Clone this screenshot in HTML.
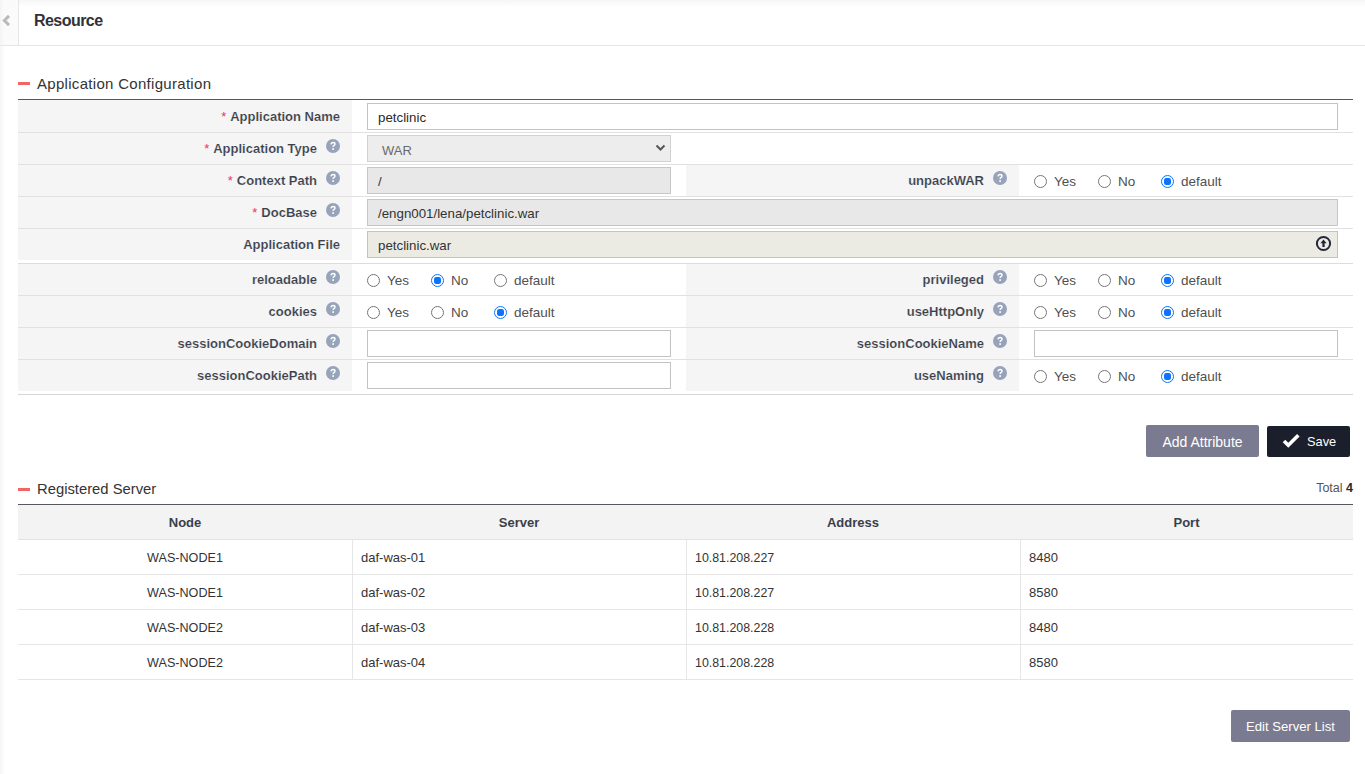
<!DOCTYPE html>
<html><head><meta charset="utf-8"><title>Resource</title>
<style>
html,body{margin:0;padding:0;background:#fff;}
body{width:1365px;height:774px;position:relative;overflow:hidden;font-family:"Liberation Sans", sans-serif;}
</style></head><body>
<div style="position:absolute;left:0px;top:0px;width:1365px;height:7px;background:linear-gradient(#f6f6f6,#ffffff);"></div>
<div style="position:absolute;left:0px;top:0px;width:18px;height:45px;background:linear-gradient(90deg,#f4f4f4,#fafafa 4px,#fbfbfb);"></div>
<div style="position:absolute;left:18px;top:0px;width:1px;height:45px;background:#e7e7e7;"></div>
<svg style="position:absolute;left:0;top:0" width="18" height="45"><polyline points="9,15.9 4.4,20.5 9,25.1" fill="none" stroke="#bababa" stroke-width="3"/></svg>
<div style="position:absolute;left:34px;top:10px;white-space:nowrap;font-weight:bold;font-size:16px;letter-spacing:-0.55px;color:#2f3238;height:22px;line-height:22px;">Resource</div>
<div style="position:absolute;left:0px;top:45px;width:1365px;height:1px;background:#e6e6e6;"></div>
<div style="position:absolute;left:0px;top:46px;width:4px;height:728px;background:linear-gradient(90deg,#f6f6f6,#fcfcfc);"></div>
<div style="position:absolute;left:18px;top:82px;width:12px;height:3px;background:#f06565;"></div>
<div style="position:absolute;left:37px;top:74px;white-space:nowrap;font-size:15px;letter-spacing:0.3px;color:#333;height:20px;line-height:20px;">Application Configuration</div>
<div style="position:absolute;left:18px;top:99px;width:1335px;height:1px;background:#55585f;"></div>
<div style="position:absolute;left:18px;top:132px;width:1335px;height:1px;background:#e1e1e1;"></div>
<div style="position:absolute;left:18px;top:164px;width:1335px;height:1px;background:#e1e1e1;"></div>
<div style="position:absolute;left:18px;top:196px;width:1335px;height:1px;background:#e1e1e1;"></div>
<div style="position:absolute;left:18px;top:228px;width:1335px;height:1px;background:#e1e1e1;"></div>
<div style="position:absolute;left:18px;top:295px;width:1335px;height:1px;background:#e1e1e1;"></div>
<div style="position:absolute;left:18px;top:327px;width:1335px;height:1px;background:#e1e1e1;"></div>
<div style="position:absolute;left:18px;top:359px;width:1335px;height:1px;background:#e1e1e1;"></div>
<div style="position:absolute;left:18px;top:263px;width:1335px;height:1px;background:#dcdcdc;"></div>
<div style="position:absolute;left:18px;top:394px;width:1335px;height:1px;background:#d6d6d6;"></div>
<div style="position:absolute;left:18px;top:100px;width:334px;height:32px;background:#f5f5f5;"></div>
<div style="position:absolute;left:18px;top:101px;white-space:nowrap;font-weight:bold;font-size:13px;color:#3a3f4a;-webkit-text-stroke:0.15px #f5f5f5;width:322px;height:32px;line-height:32px;text-align:right;"><span style="color:#e8336b;font-weight:normal;margin-right:4px;font-size:13px;-webkit-text-stroke:0">*</span>Application Name</div>
<div style="position:absolute;left:367px;top:103px;width:971px;height:27px;box-sizing:border-box;background:#fff;border:1px solid #c3c3c3;"></div>
<div style="position:absolute;left:378px;top:104px;white-space:nowrap;font-size:13.3px;color:#2a2a2a;height:27px;line-height:27px;">petclinic</div>
<div style="position:absolute;left:18px;top:133px;width:334px;height:31px;background:#f5f5f5;"></div>
<svg style="position:absolute;left:326px;top:139px" width="14" height="14" viewBox="0 0 14 14"><circle cx="7" cy="7" r="7" fill="#97a3b9"/><path d="M5.1 5.4 Q5.2 3.4 7.1 3.4 Q9 3.4 9 5 Q9 6.1 7.9 6.6 Q7.1 7 7.1 8.1" fill="none" stroke="#fff" stroke-width="1.45"/><rect x="6.25" y="9.2" width="1.7" height="1.7" fill="#fff"/></svg>
<div style="position:absolute;left:18px;top:133px;white-space:nowrap;font-weight:bold;font-size:13px;color:#3a3f4a;-webkit-text-stroke:0.15px #f5f5f5;width:299px;height:31px;line-height:31px;text-align:right;"><span style="color:#e8336b;font-weight:normal;margin-right:4px;font-size:13px;-webkit-text-stroke:0">*</span>Application Type</div>
<div style="position:absolute;left:367px;top:135px;width:304px;height:27px;box-sizing:border-box;background:#ededed;border:1px solid #d2d2d2;"></div>
<div style="position:absolute;left:382px;top:137px;white-space:nowrap;font-size:13px;color:#6a6a6a;height:27px;line-height:27px;">WAR</div>
<svg style="position:absolute;left:654px;top:143px" width="14" height="10"><polyline points="2.5,2.5 6.5,6.5 10.5,2.5" fill="none" stroke="#555" stroke-width="2"/></svg>
<div style="position:absolute;left:18px;top:165px;width:334px;height:31px;background:#f5f5f5;"></div>
<svg style="position:absolute;left:326px;top:171px" width="14" height="14" viewBox="0 0 14 14"><circle cx="7" cy="7" r="7" fill="#97a3b9"/><path d="M5.1 5.4 Q5.2 3.4 7.1 3.4 Q9 3.4 9 5 Q9 6.1 7.9 6.6 Q7.1 7 7.1 8.1" fill="none" stroke="#fff" stroke-width="1.45"/><rect x="6.25" y="9.2" width="1.7" height="1.7" fill="#fff"/></svg>
<div style="position:absolute;left:18px;top:165px;white-space:nowrap;font-weight:bold;font-size:13px;color:#3a3f4a;-webkit-text-stroke:0.15px #f5f5f5;width:299px;height:31px;line-height:31px;text-align:right;"><span style="color:#e8336b;font-weight:normal;margin-right:4px;font-size:13px;-webkit-text-stroke:0">*</span>Context Path</div>
<div style="position:absolute;left:367px;top:167px;width:304px;height:27px;box-sizing:border-box;background:#e8e8e8;border:1px solid #c6c6c6;"></div>
<div style="position:absolute;left:378px;top:168px;white-space:nowrap;font-size:13.3px;color:#333;height:27px;line-height:27px;">/</div>
<div style="position:absolute;left:686px;top:165px;width:333px;height:31px;background:#f5f5f5;"></div>
<svg style="position:absolute;left:993px;top:171px" width="14" height="14" viewBox="0 0 14 14"><circle cx="7" cy="7" r="7" fill="#97a3b9"/><path d="M5.1 5.4 Q5.2 3.4 7.1 3.4 Q9 3.4 9 5 Q9 6.1 7.9 6.6 Q7.1 7 7.1 8.1" fill="none" stroke="#fff" stroke-width="1.45"/><rect x="6.25" y="9.2" width="1.7" height="1.7" fill="#fff"/></svg>
<div style="position:absolute;left:686px;top:165px;white-space:nowrap;font-weight:bold;font-size:13px;color:#3a3f4a;-webkit-text-stroke:0.15px #f5f5f5;width:298px;height:31px;line-height:31px;text-align:right;">unpackWAR</div>
<svg style="position:absolute;left:1034px;top:175.0px" width="13" height="13" viewBox="0 0 13 13"><circle cx="6.5" cy="6.5" r="6" fill="#fff" stroke="#767676" stroke-width="1"/></svg>
<div style="position:absolute;left:1054px;top:172.0px;white-space:nowrap;font-size:13.5px;color:#505050;height:20px;line-height:20px;">Yes</div>
<svg style="position:absolute;left:1098px;top:175.0px" width="13" height="13" viewBox="0 0 13 13"><circle cx="6.5" cy="6.5" r="6" fill="#fff" stroke="#767676" stroke-width="1"/></svg>
<div style="position:absolute;left:1118px;top:172.0px;white-space:nowrap;font-size:13.5px;color:#505050;height:20px;line-height:20px;">No</div>
<svg style="position:absolute;left:1161px;top:175.0px" width="13" height="13" viewBox="0 0 13 13"><circle cx="6.5" cy="6.5" r="6" fill="#fff" stroke="#0b74ff" stroke-width="1"/><rect x="3" y="3" width="7" height="7" rx="2.2" fill="#0b74ff"/></svg>
<div style="position:absolute;left:1181px;top:172.0px;white-space:nowrap;font-size:13.5px;color:#505050;height:20px;line-height:20px;">default</div>
<div style="position:absolute;left:18px;top:197px;width:334px;height:31px;background:#f5f5f5;"></div>
<svg style="position:absolute;left:326px;top:203px" width="14" height="14" viewBox="0 0 14 14"><circle cx="7" cy="7" r="7" fill="#97a3b9"/><path d="M5.1 5.4 Q5.2 3.4 7.1 3.4 Q9 3.4 9 5 Q9 6.1 7.9 6.6 Q7.1 7 7.1 8.1" fill="none" stroke="#fff" stroke-width="1.45"/><rect x="6.25" y="9.2" width="1.7" height="1.7" fill="#fff"/></svg>
<div style="position:absolute;left:18px;top:197px;white-space:nowrap;font-weight:bold;font-size:13px;color:#3a3f4a;-webkit-text-stroke:0.15px #f5f5f5;width:299px;height:31px;line-height:31px;text-align:right;"><span style="color:#e8336b;font-weight:normal;margin-right:4px;font-size:13px;-webkit-text-stroke:0">*</span>DocBase</div>
<div style="position:absolute;left:367px;top:199px;width:971px;height:27px;box-sizing:border-box;background:#e8e8e8;border:1px solid #c6c6c6;"></div>
<div style="position:absolute;left:378px;top:200px;white-space:nowrap;font-size:13.3px;color:#333;height:27px;line-height:27px;">/engn001/lena/petclinic.war</div>
<div style="position:absolute;left:18px;top:229px;width:334px;height:31px;background:#f5f5f5;"></div>
<div style="position:absolute;left:18px;top:229px;white-space:nowrap;font-weight:bold;font-size:13px;color:#3a3f4a;-webkit-text-stroke:0.15px #f5f5f5;width:322px;height:31px;line-height:31px;text-align:right;">Application File</div>
<div style="position:absolute;left:367px;top:231px;width:971px;height:27px;box-sizing:border-box;background:#ebebe4;border:1px solid #c3c3c3;"></div>
<div style="position:absolute;left:378px;top:232px;white-space:nowrap;font-size:13.3px;color:#333;height:27px;line-height:27px;">petclinic.war</div>
<svg style="position:absolute;left:1315px;top:235px" width="17" height="17" viewBox="0 0 17 17"><circle cx="8.5" cy="8.5" r="6.6" fill="none" stroke="#232838" stroke-width="2"/><path d="M8.5 4.6 L11.6 8.2 L9.6 8.2 L9.6 12 L7.4 12 L7.4 8.2 L5.4 8.2 Z" fill="#1f2433"/></svg>
<div style="position:absolute;left:18px;top:264px;width:334px;height:31px;background:#f5f5f5;"></div>
<svg style="position:absolute;left:326px;top:270px" width="14" height="14" viewBox="0 0 14 14"><circle cx="7" cy="7" r="7" fill="#97a3b9"/><path d="M5.1 5.4 Q5.2 3.4 7.1 3.4 Q9 3.4 9 5 Q9 6.1 7.9 6.6 Q7.1 7 7.1 8.1" fill="none" stroke="#fff" stroke-width="1.45"/><rect x="6.25" y="9.2" width="1.7" height="1.7" fill="#fff"/></svg>
<div style="position:absolute;left:18px;top:264px;white-space:nowrap;font-weight:bold;font-size:13px;color:#3a3f4a;-webkit-text-stroke:0.15px #f5f5f5;width:299px;height:31px;line-height:31px;text-align:right;">reloadable</div>
<svg style="position:absolute;left:367px;top:273.5px" width="13" height="13" viewBox="0 0 13 13"><circle cx="6.5" cy="6.5" r="6" fill="#fff" stroke="#767676" stroke-width="1"/></svg>
<div style="position:absolute;left:387px;top:270.5px;white-space:nowrap;font-size:13.5px;color:#505050;height:20px;line-height:20px;">Yes</div>
<svg style="position:absolute;left:431px;top:273.5px" width="13" height="13" viewBox="0 0 13 13"><circle cx="6.5" cy="6.5" r="6" fill="#fff" stroke="#0b74ff" stroke-width="1"/><rect x="3" y="3" width="7" height="7" rx="2.2" fill="#0b74ff"/></svg>
<div style="position:absolute;left:451px;top:270.5px;white-space:nowrap;font-size:13.5px;color:#505050;height:20px;line-height:20px;">No</div>
<svg style="position:absolute;left:494px;top:273.5px" width="13" height="13" viewBox="0 0 13 13"><circle cx="6.5" cy="6.5" r="6" fill="#fff" stroke="#767676" stroke-width="1"/></svg>
<div style="position:absolute;left:514px;top:270.5px;white-space:nowrap;font-size:13.5px;color:#505050;height:20px;line-height:20px;">default</div>
<div style="position:absolute;left:686px;top:264px;width:333px;height:31px;background:#f5f5f5;"></div>
<svg style="position:absolute;left:993px;top:270px" width="14" height="14" viewBox="0 0 14 14"><circle cx="7" cy="7" r="7" fill="#97a3b9"/><path d="M5.1 5.4 Q5.2 3.4 7.1 3.4 Q9 3.4 9 5 Q9 6.1 7.9 6.6 Q7.1 7 7.1 8.1" fill="none" stroke="#fff" stroke-width="1.45"/><rect x="6.25" y="9.2" width="1.7" height="1.7" fill="#fff"/></svg>
<div style="position:absolute;left:686px;top:264px;white-space:nowrap;font-weight:bold;font-size:13px;color:#3a3f4a;-webkit-text-stroke:0.15px #f5f5f5;width:298px;height:31px;line-height:31px;text-align:right;">privileged</div>
<svg style="position:absolute;left:1034px;top:273.5px" width="13" height="13" viewBox="0 0 13 13"><circle cx="6.5" cy="6.5" r="6" fill="#fff" stroke="#767676" stroke-width="1"/></svg>
<div style="position:absolute;left:1054px;top:270.5px;white-space:nowrap;font-size:13.5px;color:#505050;height:20px;line-height:20px;">Yes</div>
<svg style="position:absolute;left:1098px;top:273.5px" width="13" height="13" viewBox="0 0 13 13"><circle cx="6.5" cy="6.5" r="6" fill="#fff" stroke="#767676" stroke-width="1"/></svg>
<div style="position:absolute;left:1118px;top:270.5px;white-space:nowrap;font-size:13.5px;color:#505050;height:20px;line-height:20px;">No</div>
<svg style="position:absolute;left:1161px;top:273.5px" width="13" height="13" viewBox="0 0 13 13"><circle cx="6.5" cy="6.5" r="6" fill="#fff" stroke="#0b74ff" stroke-width="1"/><rect x="3" y="3" width="7" height="7" rx="2.2" fill="#0b74ff"/></svg>
<div style="position:absolute;left:1181px;top:270.5px;white-space:nowrap;font-size:13.5px;color:#505050;height:20px;line-height:20px;">default</div>
<div style="position:absolute;left:18px;top:296px;width:334px;height:31px;background:#f5f5f5;"></div>
<svg style="position:absolute;left:326px;top:302px" width="14" height="14" viewBox="0 0 14 14"><circle cx="7" cy="7" r="7" fill="#97a3b9"/><path d="M5.1 5.4 Q5.2 3.4 7.1 3.4 Q9 3.4 9 5 Q9 6.1 7.9 6.6 Q7.1 7 7.1 8.1" fill="none" stroke="#fff" stroke-width="1.45"/><rect x="6.25" y="9.2" width="1.7" height="1.7" fill="#fff"/></svg>
<div style="position:absolute;left:18px;top:296px;white-space:nowrap;font-weight:bold;font-size:13px;color:#3a3f4a;-webkit-text-stroke:0.15px #f5f5f5;width:299px;height:31px;line-height:31px;text-align:right;">cookies</div>
<svg style="position:absolute;left:367px;top:305.5px" width="13" height="13" viewBox="0 0 13 13"><circle cx="6.5" cy="6.5" r="6" fill="#fff" stroke="#767676" stroke-width="1"/></svg>
<div style="position:absolute;left:387px;top:302.5px;white-space:nowrap;font-size:13.5px;color:#505050;height:20px;line-height:20px;">Yes</div>
<svg style="position:absolute;left:431px;top:305.5px" width="13" height="13" viewBox="0 0 13 13"><circle cx="6.5" cy="6.5" r="6" fill="#fff" stroke="#767676" stroke-width="1"/></svg>
<div style="position:absolute;left:451px;top:302.5px;white-space:nowrap;font-size:13.5px;color:#505050;height:20px;line-height:20px;">No</div>
<svg style="position:absolute;left:494px;top:305.5px" width="13" height="13" viewBox="0 0 13 13"><circle cx="6.5" cy="6.5" r="6" fill="#fff" stroke="#0b74ff" stroke-width="1"/><rect x="3" y="3" width="7" height="7" rx="2.2" fill="#0b74ff"/></svg>
<div style="position:absolute;left:514px;top:302.5px;white-space:nowrap;font-size:13.5px;color:#505050;height:20px;line-height:20px;">default</div>
<div style="position:absolute;left:686px;top:296px;width:333px;height:31px;background:#f5f5f5;"></div>
<svg style="position:absolute;left:993px;top:302px" width="14" height="14" viewBox="0 0 14 14"><circle cx="7" cy="7" r="7" fill="#97a3b9"/><path d="M5.1 5.4 Q5.2 3.4 7.1 3.4 Q9 3.4 9 5 Q9 6.1 7.9 6.6 Q7.1 7 7.1 8.1" fill="none" stroke="#fff" stroke-width="1.45"/><rect x="6.25" y="9.2" width="1.7" height="1.7" fill="#fff"/></svg>
<div style="position:absolute;left:686px;top:296px;white-space:nowrap;font-weight:bold;font-size:13px;color:#3a3f4a;-webkit-text-stroke:0.15px #f5f5f5;width:298px;height:31px;line-height:31px;text-align:right;">useHttpOnly</div>
<svg style="position:absolute;left:1034px;top:305.5px" width="13" height="13" viewBox="0 0 13 13"><circle cx="6.5" cy="6.5" r="6" fill="#fff" stroke="#767676" stroke-width="1"/></svg>
<div style="position:absolute;left:1054px;top:302.5px;white-space:nowrap;font-size:13.5px;color:#505050;height:20px;line-height:20px;">Yes</div>
<svg style="position:absolute;left:1098px;top:305.5px" width="13" height="13" viewBox="0 0 13 13"><circle cx="6.5" cy="6.5" r="6" fill="#fff" stroke="#767676" stroke-width="1"/></svg>
<div style="position:absolute;left:1118px;top:302.5px;white-space:nowrap;font-size:13.5px;color:#505050;height:20px;line-height:20px;">No</div>
<svg style="position:absolute;left:1161px;top:305.5px" width="13" height="13" viewBox="0 0 13 13"><circle cx="6.5" cy="6.5" r="6" fill="#fff" stroke="#0b74ff" stroke-width="1"/><rect x="3" y="3" width="7" height="7" rx="2.2" fill="#0b74ff"/></svg>
<div style="position:absolute;left:1181px;top:302.5px;white-space:nowrap;font-size:13.5px;color:#505050;height:20px;line-height:20px;">default</div>
<div style="position:absolute;left:18px;top:328px;width:334px;height:31px;background:#f5f5f5;"></div>
<svg style="position:absolute;left:326px;top:334px" width="14" height="14" viewBox="0 0 14 14"><circle cx="7" cy="7" r="7" fill="#97a3b9"/><path d="M5.1 5.4 Q5.2 3.4 7.1 3.4 Q9 3.4 9 5 Q9 6.1 7.9 6.6 Q7.1 7 7.1 8.1" fill="none" stroke="#fff" stroke-width="1.45"/><rect x="6.25" y="9.2" width="1.7" height="1.7" fill="#fff"/></svg>
<div style="position:absolute;left:18px;top:328px;white-space:nowrap;font-weight:bold;font-size:13px;color:#3a3f4a;-webkit-text-stroke:0.15px #f5f5f5;width:299px;height:31px;line-height:31px;text-align:right;">sessionCookieDomain</div>
<div style="position:absolute;left:367px;top:330px;width:304px;height:27px;box-sizing:border-box;background:#fff;border:1px solid #c3c3c3;"></div>
<div style="position:absolute;left:686px;top:328px;width:333px;height:31px;background:#f5f5f5;"></div>
<svg style="position:absolute;left:993px;top:334px" width="14" height="14" viewBox="0 0 14 14"><circle cx="7" cy="7" r="7" fill="#97a3b9"/><path d="M5.1 5.4 Q5.2 3.4 7.1 3.4 Q9 3.4 9 5 Q9 6.1 7.9 6.6 Q7.1 7 7.1 8.1" fill="none" stroke="#fff" stroke-width="1.45"/><rect x="6.25" y="9.2" width="1.7" height="1.7" fill="#fff"/></svg>
<div style="position:absolute;left:686px;top:328px;white-space:nowrap;font-weight:bold;font-size:13px;color:#3a3f4a;-webkit-text-stroke:0.15px #f5f5f5;width:298px;height:31px;line-height:31px;text-align:right;">sessionCookieName</div>
<div style="position:absolute;left:1034px;top:330px;width:304px;height:27px;box-sizing:border-box;background:#fff;border:1px solid #c3c3c3;"></div>
<div style="position:absolute;left:18px;top:360px;width:334px;height:31px;background:#f5f5f5;"></div>
<svg style="position:absolute;left:326px;top:366px" width="14" height="14" viewBox="0 0 14 14"><circle cx="7" cy="7" r="7" fill="#97a3b9"/><path d="M5.1 5.4 Q5.2 3.4 7.1 3.4 Q9 3.4 9 5 Q9 6.1 7.9 6.6 Q7.1 7 7.1 8.1" fill="none" stroke="#fff" stroke-width="1.45"/><rect x="6.25" y="9.2" width="1.7" height="1.7" fill="#fff"/></svg>
<div style="position:absolute;left:18px;top:360px;white-space:nowrap;font-weight:bold;font-size:13px;color:#3a3f4a;-webkit-text-stroke:0.15px #f5f5f5;width:299px;height:31px;line-height:31px;text-align:right;">sessionCookiePath</div>
<div style="position:absolute;left:367px;top:362px;width:304px;height:27px;box-sizing:border-box;background:#fff;border:1px solid #c3c3c3;"></div>
<div style="position:absolute;left:686px;top:360px;width:333px;height:31px;background:#f5f5f5;"></div>
<svg style="position:absolute;left:993px;top:366px" width="14" height="14" viewBox="0 0 14 14"><circle cx="7" cy="7" r="7" fill="#97a3b9"/><path d="M5.1 5.4 Q5.2 3.4 7.1 3.4 Q9 3.4 9 5 Q9 6.1 7.9 6.6 Q7.1 7 7.1 8.1" fill="none" stroke="#fff" stroke-width="1.45"/><rect x="6.25" y="9.2" width="1.7" height="1.7" fill="#fff"/></svg>
<div style="position:absolute;left:686px;top:360px;white-space:nowrap;font-weight:bold;font-size:13px;color:#3a3f4a;-webkit-text-stroke:0.15px #f5f5f5;width:298px;height:31px;line-height:31px;text-align:right;">useNaming</div>
<svg style="position:absolute;left:1034px;top:369.5px" width="13" height="13" viewBox="0 0 13 13"><circle cx="6.5" cy="6.5" r="6" fill="#fff" stroke="#767676" stroke-width="1"/></svg>
<div style="position:absolute;left:1054px;top:366.5px;white-space:nowrap;font-size:13.5px;color:#505050;height:20px;line-height:20px;">Yes</div>
<svg style="position:absolute;left:1098px;top:369.5px" width="13" height="13" viewBox="0 0 13 13"><circle cx="6.5" cy="6.5" r="6" fill="#fff" stroke="#767676" stroke-width="1"/></svg>
<div style="position:absolute;left:1118px;top:366.5px;white-space:nowrap;font-size:13.5px;color:#505050;height:20px;line-height:20px;">No</div>
<svg style="position:absolute;left:1161px;top:369.5px" width="13" height="13" viewBox="0 0 13 13"><circle cx="6.5" cy="6.5" r="6" fill="#fff" stroke="#0b74ff" stroke-width="1"/><rect x="3" y="3" width="7" height="7" rx="2.2" fill="#0b74ff"/></svg>
<div style="position:absolute;left:1181px;top:366.5px;white-space:nowrap;font-size:13.5px;color:#505050;height:20px;line-height:20px;">default</div>
<div style="position:absolute;left:1146px;top:425px;width:113px;height:32px;background:#7a7b90;border-radius:2px;"></div>
<div style="position:absolute;left:1146px;top:426px;white-space:nowrap;font-size:14px;color:#fff;width:113px;height:32px;line-height:32px;text-align:center;">Add Attribute</div>
<div style="position:absolute;left:1267px;top:426px;width:83px;height:31px;background:#1b1e2b;border-radius:2px;"></div>
<svg style="position:absolute;left:1281px;top:432px" width="20" height="18" viewBox="0 0 20 18"><polyline points="3,9 7.3,13.3 17.3,3.3" fill="none" stroke="#fff" stroke-width="3.6"/></svg>
<div style="position:absolute;left:1307px;top:426px;white-space:nowrap;font-size:12.8px;color:#fff;height:32px;line-height:32px;">Save</div>
<div style="position:absolute;left:18px;top:488px;width:12px;height:3px;background:#f06565;"></div>
<div style="position:absolute;left:37px;top:479px;white-space:nowrap;font-size:14.8px;color:#333;height:20px;line-height:20px;">Registered Server</div>
<div style="position:absolute;left:1200px;top:478px;white-space:nowrap;font-size:12.5px;color:#555;width:153px;height:20px;line-height:20px;text-align:right;">Total <b style="color:#2a2a2a">4</b></div>
<div style="position:absolute;left:18px;top:504px;width:1335px;height:1px;background:#55585f;"></div>
<div style="position:absolute;left:18px;top:505px;width:1335px;height:34px;background:#f3f3f3;"></div>
<div style="position:absolute;left:18px;top:539px;width:1335px;height:1px;background:#e2e2e2;"></div>
<div style="position:absolute;left:18px;top:506px;white-space:nowrap;font-weight:bold;font-size:13px;color:#3a3f4a;width:334px;height:34px;line-height:34px;text-align:center;">Node</div>
<div style="position:absolute;left:352px;top:506px;white-space:nowrap;font-weight:bold;font-size:13px;color:#3a3f4a;width:334px;height:34px;line-height:34px;text-align:center;">Server</div>
<div style="position:absolute;left:686px;top:506px;white-space:nowrap;font-weight:bold;font-size:13px;color:#3a3f4a;width:334px;height:34px;line-height:34px;text-align:center;">Address</div>
<div style="position:absolute;left:1020px;top:506px;white-space:nowrap;font-weight:bold;font-size:13px;color:#3a3f4a;width:333px;height:34px;line-height:34px;text-align:center;">Port</div>
<div style="position:absolute;left:18px;top:574px;width:1335px;height:1px;background:#e6e6e6;"></div>
<div style="position:absolute;left:18px;top:541px;white-space:nowrap;font-size:12.6px;color:#333;width:334px;height:34px;line-height:34px;text-align:center;">WAS-NODE1</div>
<div style="position:absolute;left:361px;top:541px;white-space:nowrap;font-size:13px;color:#333;height:34px;line-height:34px;">daf-was-01</div>
<div style="position:absolute;left:695px;top:541px;white-space:nowrap;font-size:12.4px;color:#333;height:34px;line-height:34px;">10.81.208.227</div>
<div style="position:absolute;left:1029px;top:541px;white-space:nowrap;font-size:13px;color:#333;height:34px;line-height:34px;">8480</div>
<div style="position:absolute;left:18px;top:609px;width:1335px;height:1px;background:#e6e6e6;"></div>
<div style="position:absolute;left:18px;top:576px;white-space:nowrap;font-size:12.6px;color:#333;width:334px;height:34px;line-height:34px;text-align:center;">WAS-NODE1</div>
<div style="position:absolute;left:361px;top:576px;white-space:nowrap;font-size:13px;color:#333;height:34px;line-height:34px;">daf-was-02</div>
<div style="position:absolute;left:695px;top:576px;white-space:nowrap;font-size:12.4px;color:#333;height:34px;line-height:34px;">10.81.208.227</div>
<div style="position:absolute;left:1029px;top:576px;white-space:nowrap;font-size:13px;color:#333;height:34px;line-height:34px;">8580</div>
<div style="position:absolute;left:18px;top:644px;width:1335px;height:1px;background:#e6e6e6;"></div>
<div style="position:absolute;left:18px;top:611px;white-space:nowrap;font-size:12.6px;color:#333;width:334px;height:34px;line-height:34px;text-align:center;">WAS-NODE2</div>
<div style="position:absolute;left:361px;top:611px;white-space:nowrap;font-size:13px;color:#333;height:34px;line-height:34px;">daf-was-03</div>
<div style="position:absolute;left:695px;top:611px;white-space:nowrap;font-size:12.4px;color:#333;height:34px;line-height:34px;">10.81.208.228</div>
<div style="position:absolute;left:1029px;top:611px;white-space:nowrap;font-size:13px;color:#333;height:34px;line-height:34px;">8480</div>
<div style="position:absolute;left:18px;top:679px;width:1335px;height:1px;background:#e6e6e6;"></div>
<div style="position:absolute;left:18px;top:646px;white-space:nowrap;font-size:12.6px;color:#333;width:334px;height:34px;line-height:34px;text-align:center;">WAS-NODE2</div>
<div style="position:absolute;left:361px;top:646px;white-space:nowrap;font-size:13px;color:#333;height:34px;line-height:34px;">daf-was-04</div>
<div style="position:absolute;left:695px;top:646px;white-space:nowrap;font-size:12.4px;color:#333;height:34px;line-height:34px;">10.81.208.228</div>
<div style="position:absolute;left:1029px;top:646px;white-space:nowrap;font-size:13px;color:#333;height:34px;line-height:34px;">8580</div>
<div style="position:absolute;left:352px;top:540px;width:1px;height:139px;background:#e6e6e6;"></div>
<div style="position:absolute;left:686px;top:540px;width:1px;height:139px;background:#e6e6e6;"></div>
<div style="position:absolute;left:1020px;top:540px;width:1px;height:139px;background:#e6e6e6;"></div>
<div style="position:absolute;left:1231px;top:710px;width:119px;height:32px;background:#7a7b90;border-radius:2px;"></div>
<div style="position:absolute;left:1231px;top:711px;white-space:nowrap;font-size:13.1px;color:#fff;width:119px;height:32px;line-height:32px;text-align:center;">Edit Server List</div>
</body></html>
